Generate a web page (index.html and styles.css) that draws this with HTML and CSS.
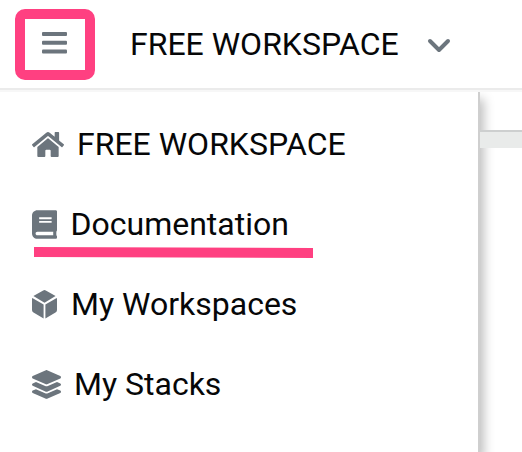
FILE: index.html
```html
<!DOCTYPE html>
<html lang="en">
<head>
<meta charset="utf-8">
<title>Free Workspace</title>
<link rel="stylesheet" href="styles.css">
</head>
<body>
<header class="topbar">
  <button class="menu-button" aria-label="Menu">
    <svg class="menu-icon" viewBox="0 0 25 22"><rect width="25" height="4" rx="1"/><rect y="8.75" width="25" height="4" rx="1"/><rect y="17.5" width="25" height="4" rx="1"/></svg>
  </button>
  <span class="workspace">FREE WORKSPACE</span>
  <svg class="chevron" viewBox="0 0 24 16"><path d="M3 3l9 9 9-9"/></svg>
</header>
<div class="body">
  <nav class="drawer">
    <a class="item home"><svg class="icon" viewBox="0 0 576 512"><path d="M280.37 148.26L96 300.11V464a16 16 0 0 0 16 16l112.06-.29a16 16 0 0 0 15.92-16V368a16 16 0 0 1 16-16h64a16 16 0 0 1 16 16v95.64a16 16 0 0 0 16 16.05L464 480a16 16 0 0 0 16-16V300L295.67 148.26a12.19 12.19 0 0 0-15.3 0zM571.6 251.47L488 182.56V44.05a12 12 0 0 0-12-12h-56a12 12 0 0 0-12 12v72.61L318.47 43a48 48 0 0 0-61 0L4.34 251.47a12 12 0 0 0-1.6 16.9l25.5 31A12 12 0 0 0 45.15 301l235.22-193.74a12.19 12.19 0 0 1 15.3 0L530.9 301a12 12 0 0 0 16.9-1.6l25.5-31a12 12 0 0 0-1.7-16.93z"/></svg><span>FREE WORKSPACE</span></a>
    <a class="item docs"><svg class="icon" viewBox="0 0 448 512"><path d="M448 360V24c0-13.3-10.7-24-24-24H96C43 0 0 43 0 96v320c0 53 43 96 96 96h328c13.3 0 24-10.7 24-24v-16c0-7.5-3.5-14.3-8.9-18.7-4.2-15.4-4.2-59.3 0-74.7 5.4-4.3 8.9-11.1 8.9-18.6zM128 134c0-3.3 2.7-6 6-6h212c3.3 0 6 2.7 6 6v20c0 3.3-2.7 6-6 6H134c-3.3 0-6-2.7-6-6v-20zm0 64c0-3.3 2.7-6 6-6h212c3.3 0 6 2.7 6 6v20c0 3.3-2.7 6-6 6H134c-3.3 0-6-2.7-6-6v-20zm253.4 250H96c-17.7 0-32-14.3-32-32 0-17.6 14.4-32 32-32h285.4c-1.9 17.1-1.9 46.9 0 64z"/></svg><span>Documentation</span>
      <svg class="underline" viewBox="0 0 279 11"><path d="M0 0L279 1V11L0 10z"/></svg></a>
    <a class="item spaces"><svg class="icon" viewBox="0 0 25 29"><path d="M11.2.4Q12.5-.3 13.8.4L23.6 6.1 12.5 12.7 1.4 6.1zM.3 8L11.6 14.6V28.4L1.5 22.6Q0 21.8 0 20V9Q0 8.4.3 8zM24.7 8L13.4 14.6V28.4L23.5 22.6Q25 21.8 25 20V9Q25 8.4 24.7 8z"/></svg><span>My Workspaces</span></a>
    <a class="item stacks"><svg class="icon" viewBox="0 0 512 512"><path d="M12.41 148.02l232.94 105.67c6.8 3.09 14.49 3.09 21.29 0l232.94-105.67c16.55-7.51 16.55-32.52 0-40.03L266.65 2.31a25.607 25.607 0 0 0-21.29 0L12.41 107.98c-16.55 7.51-16.55 32.53 0 40.04zm487.18 88.28l-58.09-26.33-161.64 73.27c-7.56 3.43-15.59 5.17-23.86 5.17s-16.29-1.74-23.86-5.17L70.51 209.97l-58.1 26.33c-16.55 7.5-16.55 32.5 0 40l232.94 105.59c6.8 3.08 14.49 3.08 21.29 0L499.59 276.3c16.55-7.5 16.55-32.5 0-40zm0 127.8l-57.87-26.23-161.86 73.37c-7.56 3.43-15.59 5.17-23.86 5.17s-16.29-1.74-23.86-5.17L70.29 337.87 12.41 364.1c-16.55 7.5-16.55 32.5 0 40l232.94 105.59c6.8 3.08 14.49 3.08 21.29 0L499.59 404.1c16.55-7.5 16.55-32.5 0-40z"/></svg><span>My Stacks</span></a>
  </nav>
  <main class="content"><div class="divider"></div></main>
</div>
</body>
</html>
```

FILE: styles.css
```css
* { box-sizing: border-box; }
body { margin: 0; width: 522px; height: 452px; overflow: hidden; background: #fff; color: #060708; font: 32px/40px Roboto, sans-serif; }
.topbar { display: flex; align-items: center; height: 90px; padding: 1px 0 0 15px; border-bottom: 2px solid #ebebeb; }
.menu-button { display: flex; align-items: center; justify-content: center; width: 80px; height: 71px; padding: 0 1px 3px 0; border: 10px solid #ff4081; border-radius: 10px; background: #fff; }
.menu-icon { width: 25px; height: 22px; fill: #6c757d; }
.workspace { margin: 0 0 2px 35px; white-space: nowrap; }
.chevron { width: 24px; height: 16px; margin: 2px 0 0 28px; fill: none; stroke: #6c757d; stroke-width: 4; stroke-linecap: round; stroke-linejoin: round; }
.body { display: flex; height: 362px; overflow: hidden; border-top: 2px solid #f7f7f7; }
.drawer { width: 480px; padding-top: 12px; background: #fff; border-right: 2px solid #cfcfcf; box-shadow: 4px 7px 10px rgba(0,0,0,.25); }
.item { position: relative; display: flex; align-items: center; height: 80px; padding-left: 31.5px; white-space: nowrap; }
.icon { flex: none; height: 29px; fill: #6c757d; }
.home .icon { width: 32px; }
.home span { margin-left: 13.5px; }
.docs .icon { width: 25px; }
.docs span { margin-left: 14px; }
.spaces .icon { width: 25px; }
.spaces span { margin-left: 14.5px; }
.stacks .icon { width: 29px; }
.stacks span { margin-left: 13.5px; }
.underline { position: absolute; left: 34px; top: 63px; width: 279px; height: 11px; fill: #ff4081; }
.content { flex: 1; padding-top: 38px; }
.divider { position: relative; height: 18px; border-top: 2px solid #cdcfcf; background: #e9ebea; }
```
